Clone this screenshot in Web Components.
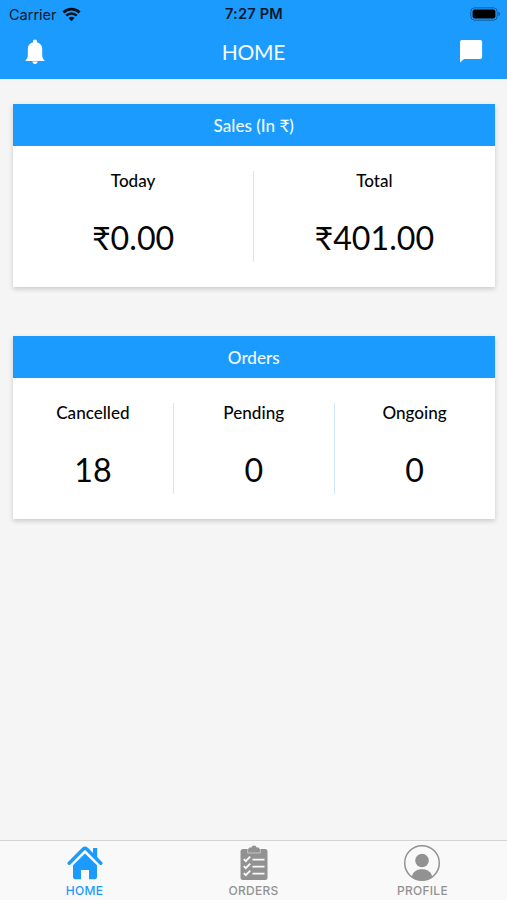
<!DOCTYPE html>
<html lang="en">
<head>
<meta charset="utf-8">
<title>Home</title>
<style>
html, body { margin: 0; height: 100%; }
body { background: #f5f5f5; font-family: Lato, "Noto Sans", sans-serif; overflow: hidden; }
</style>
</head>
<body>
<app-screen></app-screen>
<script>
const define = (name, html) => customElements.define(name, class extends HTMLElement {
  constructor() {
    super();
    const t = document.createElement('template');
    t.innerHTML = html;
    this.attachShadow({ mode: 'open' }).append(t.content.cloneNode(true));
  }
});

define('status-bar', `
<style>
:host { display: grid; grid-template-columns: 1fr auto 1fr; align-items: center; height: 27px; padding: 0 6px 0 9px; color: #06182a; font: 14.5px/27px Inter, sans-serif; }
.left { display: flex; align-items: center; gap: 5px; }
.left span { padding-top: 1px; line-height: 26px; }
.time { font-weight: 600; font-size: 14.6px; letter-spacing: .2px; padding: 1px 2px 0 0; line-height: 27px; }
.right { display: flex; justify-content: flex-end; }
svg { display: block; }
</style>
<div class="left"><span>Carrier</span>
<svg width="19" height="15" viewBox="0 0 19 15"><path d="M1.4 5.4A11.7 11.7 0 0 1 17.6 5.4" fill="none" stroke="#06121e" stroke-width="2.800"/><path d="M4.200 8.600A7.600 7.600 0 0 1 14.800 8.600" fill="none" stroke="#06121e" stroke-width="2.500"/><path d="M6.500 11A4.500 4.500 0 0 1 12.500 11L9.500 14.200Z" fill="#06121e"/></svg></div>
<span class="time">7:27 PM</span>
<div class="right"><svg width="31" height="14" viewBox="0 0 31 14"><rect x=".8" y=".8" width="26.4" height="12.4" rx="3.8" fill="none" stroke="#125c9d"/><rect x="2.6" y="2.5" width="22.8" height="9" rx="2.2" fill="#000"/><path d="M28.4 4.8c2.3.8 2.3 3.6 0 4.4z" fill="#125c9d"/></svg></div>`);

define('nav-header', `
<style>
:host { display: grid; grid-template-columns: 1fr auto 1fr; align-items: center; height: 52px; padding: 0 24px; color: #f5faff; }
h1 { margin: 0; font-size: 21px; font-weight: 400; line-height: 50px; height: 52px; letter-spacing: -.3px; }
svg { display: block; fill: #fff; margin-bottom: 2px; }
.chat { justify-self: end; margin-bottom: 4px; }
</style>
<svg class="bell" width="22" height="26" viewBox="0 0 22 26"><path d="M11 .5c1.200 0 2 .8 2 2v.7c3.300.8 5.200 3.400 5.200 6.700v5.800c0 3 .7 4.300 2.600 6.200H1.200c1.900-1.900 2.600-3.200 2.600-6.200V9.900c0-3.300 1.900-5.900 5.200-6.700v-.7c0-1.200.8-2 2-2zM8.300 22.600h5.400c-.2 1.600-1.200 2.500-2.700 2.500s-2.500-.9-2.700-2.500z"/></svg>
<h1>HOME</h1>
<svg class="chat" width="24" height="24" viewBox="0 0 24 24"><path d="M3 1h18.300a1.800 1.800 0 0 1 1.800 1.800v15.400a1.800 1.800 0 0 1-1.800 1.800H5L1 23.500V3a2 2 0 0 1 2-2z"/></svg>`);

define('stat-card', `
<style>
:host { display: block; height: 183px; background: #fff; box-shadow: 0 2px 5px rgba(0,0,0,.18); }
header { height: 42.5px; background: #1c9bff; color: #effaff; text-align: center; font-weight: 500; font-size: 17.1px; line-height: 43px; }
.row { display: flex; padding-top: 24.5px; height: 91px; }
</style>
<header><slot name="title"></slot></header>
<div class="row"><slot></slot></div>`);

define('stat-item', `
<style>
:host { display: flex; flex: 1 1 0; flex-direction: column; align-items: center; box-sizing: border-box; height: 91px; border-right: 1px solid #cfe9fc; color: #050505; }
:host(:last-child) { border-right: 0; }
.label { font-weight: 500; font-size: 17.1px; line-height: 19px; }
.value { font-size: 32.2px; line-height: 40px; margin-top: 28px; }
</style>
<div class="label"><slot name="label"></slot></div>
<div class="value"><slot></slot></div>`);

define('tab-item', `
<style>
:host { display: flex; flex: 1 1 0; flex-direction: column; align-items: center; color: #929292; }
:host([active]) { color: #1c9bff; }
.icon { height: 43px; display: flex; align-items: center; }
.text { font: 500 12px/14px Inter, sans-serif; letter-spacing: .25px; }
</style>
<div class="icon"><slot name="icon"></slot></div>
<div class="text"><slot></slot></div>`);

define('tab-bar', `
<style>
:host { display: flex; height: 59px; background: #f9f9f9; border-top: 1px solid #d4d4d4; box-sizing: content-box; }
svg { display: block; }
</style>
<tab-item active><svg slot="icon" width="36" height="34" viewBox="0 0 36 34"><path d="M2.2 17.200 16.300 3.100q1.700-1.500 3.400 0L33.800 17.200" fill="none" stroke="currentColor" stroke-width="3.400" stroke-linecap="round"/><path d="M26 2h4.200v11L26 8.800z" fill="currentColor"/><path d="M18 7.400 30 19.300V31a2.300 2.300 0 0 1-2.300 2.300H22V24h-8v9.300H8.300A2.300 2.300 0 0 1 6 31V19.300z" fill="currentColor"/></svg>HOME</tab-item>
<tab-item><svg slot="icon" width="30" height="36" viewBox="0 0 30 36"><path d="M4 4h22a2.500 2.500 0 0 1 2.500 2.500v26A2.500 2.500 0 0 1 26 35H4a2.500 2.500 0 0 1-2.500-2.500v-26A2.500 2.500 0 0 1 4 4z" fill="currentColor"/><path d="M9.500 7V3.800A1.500 1.500 0 0 1 11 2.500h1.300a2.800 2.800 0 0 1 5.400 0H19a1.500 1.500 0 0 1 1.500 1.300V7z" fill="currentColor"/><path d="M8.700 4v4h12.600V4" fill="none" stroke="#d2d2d2" stroke-width=".8"/><path d="m4.800 14.200 2 2 4.400-4.500M4.800 21.200l2 2 4.400-4.500M4.800 28.200l2 2 4.400-4.500M13.500 14.600h12M13.500 21.600h12M13.500 28.600h12" fill="none" stroke="#f9f9f9" stroke-width="1.900"/></svg>ORDERS</tab-item>
<tab-item><svg slot="icon" width="39" height="38" viewBox="0 0 39 38"><circle cx="19" cy="19" r="17.300" fill="none" stroke="currentColor" stroke-width="1.500"/><circle cx="19" cy="16.500" r="6.800" fill="currentColor"/><path d="M8.800 32.900C9.800 27.800 13.600 25.300 19 25.300S28.200 27.800 29.200 32.900A17.300 17.300 0 0 1 8.800 32.900z" fill="currentColor"/></svg>PROFILE</tab-item>`);

define('app-screen', `
<style>
:host { display: flex; flex-direction: column; height: 900px; background: #f5f5f5; }
.top { background: #1c9bff; height: 79px; flex: none; }
main { flex: 1; display: flex; flex-direction: column; gap: 49px; padding: 24.5px 12.5px 0 13px; }
</style>
<div class="top"><status-bar></status-bar><nav-header></nav-header></div>
<main>
<stat-card><span slot="title">Sales (In ₹)</span>
<stat-item><span slot="label">Today</span>₹0.00</stat-item>
<stat-item><span slot="label">Total</span>₹401.00</stat-item></stat-card>
<stat-card><span slot="title">Orders</span>
<stat-item><span slot="label">Cancelled</span>18</stat-item>
<stat-item><span slot="label">Pending</span>0</stat-item>
<stat-item><span slot="label">Ongoing</span>0</stat-item></stat-card>
</main>
<tab-bar></tab-bar>`);
</script>
</body>
</html>
